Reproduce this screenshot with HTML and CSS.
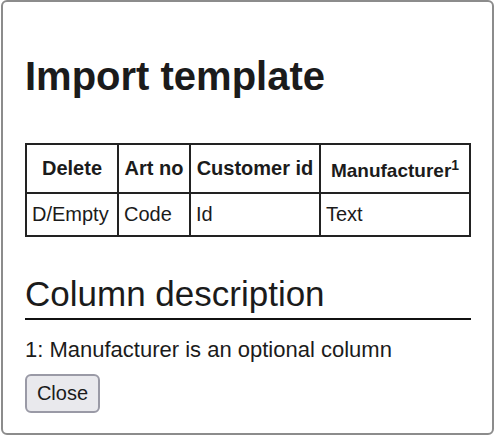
FILE: index.html
```html
<!DOCTYPE html>
<html>
<head>
<meta charset="UTF-8">
<title>Import template</title>
<link rel="stylesheet" href="styles.css">
</head>
<body>
<div class="dialog">
  <h1 class="title">Import template</h1>
  <table class="template">
    <tr>
      <th class="c-delete">Delete</th>
      <th class="c-art">Art no</th>
      <th class="c-cust">Customer id</th>
      <th class="c-man">Manufacturer<sup>1</sup></th>
    </tr>
    <tr>
      <td>D/Empty</td>
      <td>Code</td>
      <td>Id</td>
      <td>Text</td>
    </tr>
  </table>
  <h2 class="subtitle">Column description</h2>
  <p class="note">1: Manufacturer is an optional column</p>
  <button class="close" type="button">Close</button>
</div>
</body>
</html>
```

FILE: styles.css
```css
html, body {
	margin:0;
	background-color:#fff;
}

body {
	font-family:"Liberation Sans", Arial, sans-serif;
	color:#1b1b1b;
}

.dialog
{
	box-sizing:border-box;
	width:493px;
	height:435px;
	margin-left:1px;
	padding:24px 21px 0 22px;
	border:2px solid #8c8c8c;
	border-radius:6px;
	background-color:#fff;
}

.title
{
	font-size:40px;
	line-height:46px;
	margin:27px 0 44px 0;
}

.template
{
	border-collapse:collapse;
	width:446px;
	font-size:20px;
}

.template th,
.template td
{
	border:2px solid #222;
	padding:9px 5px;
	text-align:left;
	line-height:23px;
}

.template th
{
	text-align:center;
	padding:12px 5px;
}

.template th.c-man
{
	font-size:19px;
	padding:14px 5px 10px 5px;
}

.template sup
{
	font-size:14px;
	line-height:0;
}

.c-delete { width:80px; }
.c-art { width:60px; }
.c-cust { width:118px; }

.subtitle
{
	font-size:35px;
	font-weight:normal;
	line-height:40px;
	margin:37px 0 0 0;
	padding-bottom:4px;
	border-bottom:2px solid #111;
}

.note
{
	font-size:22px;
	line-height:25px;
	margin:17px 0 12px 0;
}

.close
{
	font-family:"Liberation Sans", Arial, sans-serif;
	font-size:20px;
	color:#1b1b1b;
	width:75px;
	height:39px;
	padding:0;
	background-color:#e9e9ed;
	border:2px solid #9a9aa6;
	border-radius:6px;
}
```
